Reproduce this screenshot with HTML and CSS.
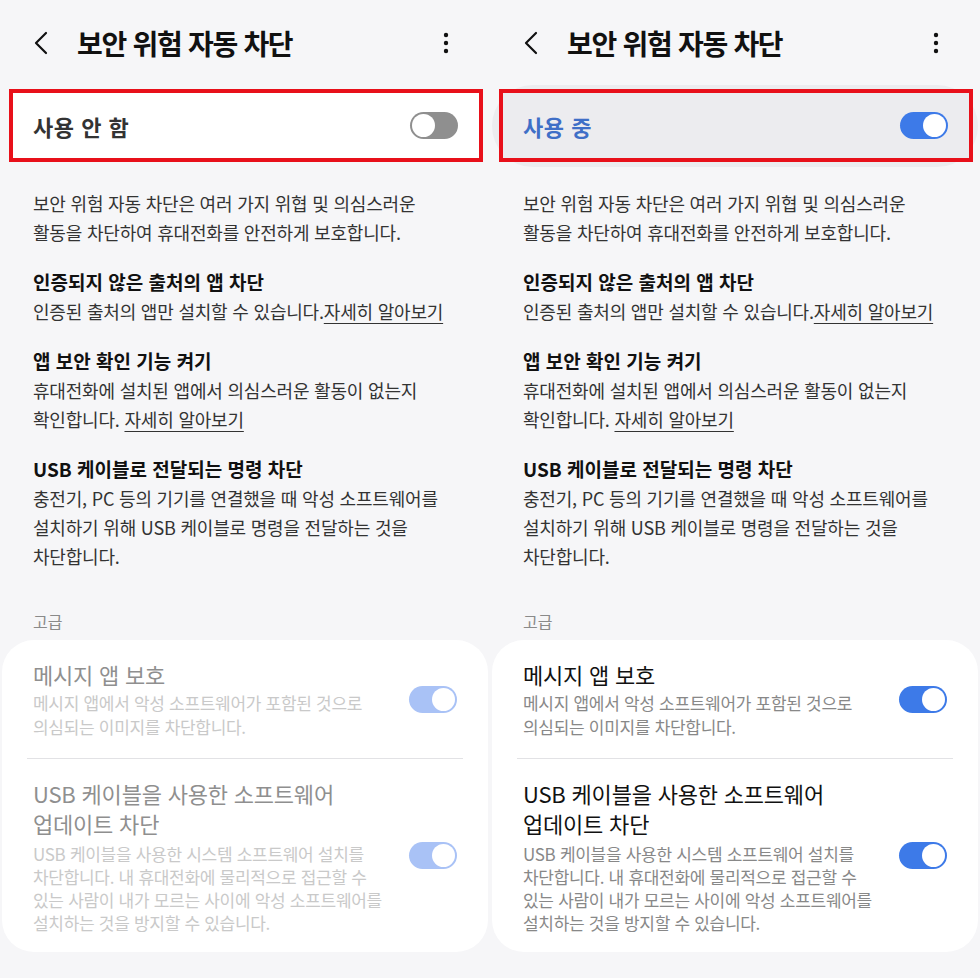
FILE: index.html
```html
<!DOCTYPE html>
<html lang="ko">
<head>
<meta charset="utf-8">
<title>보안 위험 자동 차단</title>
<link rel="stylesheet" href="styles.css">
</head>
<body>
<div class="screens">
  <section class="screen">
    <header class="appbar">
      <svg class="back" viewBox="0 0 20 26" width="20" height="26"><path d="M14 3 L4 13 L14 23" fill="none" stroke="#111" stroke-width="2.2" stroke-linecap="round" stroke-linejoin="round"/></svg>
      <h1 class="title">보안 위험 자동 차단</h1>
      <svg class="kebab" viewBox="0 0 6 22" width="6" height="22"><circle cx="3" cy="3" r="2.2" fill="#111"/><circle cx="3" cy="11" r="2.2" fill="#111"/><circle cx="3" cy="19" r="2.2" fill="#111"/></svg>
    </header>
    <div class="master">
      <div class="master-box">
        <span class="master-label">사용 안 함</span>
        <span class="toggle toggle--off"><span class="knob"></span></span>
      </div>
    </div>
    <div class="content">
      <p class="intro">보안 위험 자동 차단은 여러 가지 위협 및 의심스러운<br>활동을 차단하여 휴대전화를 안전하게 보호합니다.</p>
      <h2 class="sec-title">인증되지 않은 출처의 앱 차단</h2>
      <p class="sec-desc">인증된 출처의 앱만 설치할 수 있습니다.<a class="link">자세히 알아보기</a></p>
      <h2 class="sec-title">앱 보안 확인 기능 켜기</h2>
      <p class="sec-desc">휴대전화에 설치된 앱에서 의심스러운 활동이 없는지<br>확인합니다. <a class="link">자세히 알아보기</a></p>
      <h2 class="sec-title">USB 케이블로 전달되는 명령 차단</h2>
      <p class="sec-desc">충전기, PC 등의 기기를 연결했을 때 악성 소프트웨어를<br>설치하기 위해 USB 케이블로 명령을 전달하는 것을<br>차단합니다.</p>
      <p class="group-label">고급</p>
    </div>
    <div class="card card--disabled">
      <div class="item item--first">
        <div class="item-text">
          <div class="item-title">메시지 앱 보호</div>
          <div class="item-desc">메시지 앱에서 악성 소프트웨어가 포함된 것으로<br>의심되는 이미지를 차단합니다.</div>
        </div>
        <span class="toggle toggle--dim"><span class="knob"></span></span>
      </div>
      <div class="divider"></div>
      <div class="item item--second">
        <div class="item-text">
          <div class="item-title item-title--tall">USB 케이블을 사용한 소프트웨어<br>업데이트 차단</div>
          <div class="item-desc item-desc--tight">USB 케이블을 사용한 시스템 소프트웨어 설치를<br>차단합니다. 내 휴대전화에 물리적으로 접근할 수<br>있는 사람이 내가 모르는 사이에 악성 소프트웨어를<br>설치하는 것을 방지할 수 있습니다.</div>
        </div>
        <span class="toggle toggle--dim"><span class="knob"></span></span>
      </div>
    </div>
  </section>

  <section class="screen">
    <header class="appbar">
      <svg class="back" viewBox="0 0 20 26" width="20" height="26"><path d="M14 3 L4 13 L14 23" fill="none" stroke="#111" stroke-width="2.2" stroke-linecap="round" stroke-linejoin="round"/></svg>
      <h1 class="title">보안 위험 자동 차단</h1>
      <svg class="kebab" viewBox="0 0 6 22" width="6" height="22"><circle cx="3" cy="3" r="2.2" fill="#111"/><circle cx="3" cy="11" r="2.2" fill="#111"/><circle cx="3" cy="19" r="2.2" fill="#111"/></svg>
    </header>
    <div class="master master--on">
      <div class="master-box">
        <span class="master-label">사용 중</span>
        <span class="toggle toggle--on"><span class="knob"></span></span>
      </div>
    </div>
    <div class="content">
      <p class="intro">보안 위험 자동 차단은 여러 가지 위협 및 의심스러운<br>활동을 차단하여 휴대전화를 안전하게 보호합니다.</p>
      <h2 class="sec-title">인증되지 않은 출처의 앱 차단</h2>
      <p class="sec-desc">인증된 출처의 앱만 설치할 수 있습니다.<a class="link">자세히 알아보기</a></p>
      <h2 class="sec-title">앱 보안 확인 기능 켜기</h2>
      <p class="sec-desc">휴대전화에 설치된 앱에서 의심스러운 활동이 없는지<br>확인합니다. <a class="link">자세히 알아보기</a></p>
      <h2 class="sec-title">USB 케이블로 전달되는 명령 차단</h2>
      <p class="sec-desc">충전기, PC 등의 기기를 연결했을 때 악성 소프트웨어를<br>설치하기 위해 USB 케이블로 명령을 전달하는 것을<br>차단합니다.</p>
      <p class="group-label">고급</p>
    </div>
    <div class="card">
      <div class="item item--first">
        <div class="item-text">
          <div class="item-title">메시지 앱 보호</div>
          <div class="item-desc">메시지 앱에서 악성 소프트웨어가 포함된 것으로<br>의심되는 이미지를 차단합니다.</div>
        </div>
        <span class="toggle toggle--on"><span class="knob"></span></span>
      </div>
      <div class="divider"></div>
      <div class="item item--second">
        <div class="item-text">
          <div class="item-title item-title--tall">USB 케이블을 사용한 소프트웨어<br>업데이트 차단</div>
          <div class="item-desc item-desc--tight">USB 케이블을 사용한 시스템 소프트웨어 설치를<br>차단합니다. 내 휴대전화에 물리적으로 접근할 수<br>있는 사람이 내가 모르는 사이에 악성 소프트웨어를<br>설치하는 것을 방지할 수 있습니다.</div>
        </div>
        <span class="toggle toggle--on"><span class="knob"></span></span>
      </div>
    </div>
  </section>
</div>
</body>
</html>
```

FILE: styles.css
```css
* { box-sizing: border-box; }

html, body {
  margin: 0;
  padding: 0;
  background: #f6f6f8;
}

body {
  font-family: "Noto Sans CJK KR", "Noto Sans", sans-serif;
  color: #111;
  width: 980px;
  height: 978px;
  overflow: hidden;
}

.screens {
  display: flex;
}

.screen {
  width: 490px;
  flex: none;
}

/* app bar */
.appbar {
  height: 85px;
  display: flex;
  align-items: center;
  padding-left: 32px;
  padding-right: 41px;
}

.back {
  flex: none;
  margin-right: 25px;
}

.title {
  flex: 1;
  margin: 0;
  font-size: 28px;
  font-weight: 700;
  letter-spacing: -1.3px;
  line-height: 36px;
  color: #111;
}

.kebab {
  flex: none;
}

/* master switch */
.master {
  margin: 0 2px;
  height: 82px;
  border-radius: 41px;
  padding: 4px 5px 5px 7px;
  display: flex;
}

.master--on {
  background: #ececef;
}

.master-box {
  flex: 1;
  border: 4px solid #e8101a;
  background: #fff;
  display: flex;
  align-items: center;
  justify-content: space-between;
  padding: 0 21.5px 0 20px;
}

.master--on .master-box {
  background: #ececef;
}

.master-label {
  font-size: 22px;
  font-weight: 700;
  letter-spacing: 0.5px;
  color: #333;
}

.master--on .master-label {
  color: #3f6fc7;
}

/* toggles */
.toggle {
  flex: none;
  width: 48px;
  height: 27px;
  border-radius: 14px;
  position: relative;
  display: block;
}

.toggle .knob {
  position: absolute;
  top: 2px;
  width: 23px;
  height: 23px;
  border-radius: 50%;
  background: #fff;
}

.toggle--on {
  background: #3d7ae8;
}

.toggle--on .knob,
.toggle--dim .knob {
  right: 2px;
}

.toggle--dim {
  background: #a9c2f6;
}

.toggle--off {
  background: #8f8f8f;
}

.toggle--off .knob {
  left: 2px;
}

/* content */
.content {
  padding: 0 33px;
}

.intro,
.sec-desc {
  margin: 0;
  font-size: 18px;
  line-height: 29px;
  letter-spacing: -0.2px;
  color: #333;
  white-space: nowrap;
}

.intro {
  margin-top: 21.5px;
}

.sec-title {
  margin: 19px 0 0;
  font-size: 19px;
  font-weight: 700;
  line-height: 31px;
  letter-spacing: 0;
  color: #111;
}

.link {
  color: #333;
  text-decoration: underline;
  text-underline-offset: 4px;
  text-decoration-thickness: 1px;
}

.group-label {
  margin: 40.5px 0 0;
  font-size: 16px;
  line-height: 20px;
  color: #8a8a8a;
}

/* card */
.card {
  margin: 9px 2px 0;
  background: #fff;
  border-radius: 32px;
}

.item {
  display: flex;
  align-items: center;
  padding: 0 31px;
}

.item--first {
  padding-top: 20px;
  padding-bottom: 19px;
}

.item--second {
  padding-top: 19px;
  padding-bottom: 18.5px;
}

.item-text {
  flex: 1;
  min-width: 0;
  white-space: nowrap;
}

.item-title {
  font-size: 22px;
  line-height: 28px;
  letter-spacing: -0.2px;
  color: #111;
}

.item-title--tall {
  line-height: 30px;
}

.item-desc {
  margin-top: 3px;
  font-size: 17px;
  line-height: 24px;
  letter-spacing: -0.3px;
  color: #888;
}

.item-desc--tight {
  margin-top: 3.5px;
  line-height: 23px;
}

.divider {
  height: 1px;
  margin: 0 25px;
  background: #e2e2e5;
}

.card--disabled .item-title {
  color: #8f8f8f;
}

.card--disabled .item-desc {
  color: #c9c9c9;
}
```
